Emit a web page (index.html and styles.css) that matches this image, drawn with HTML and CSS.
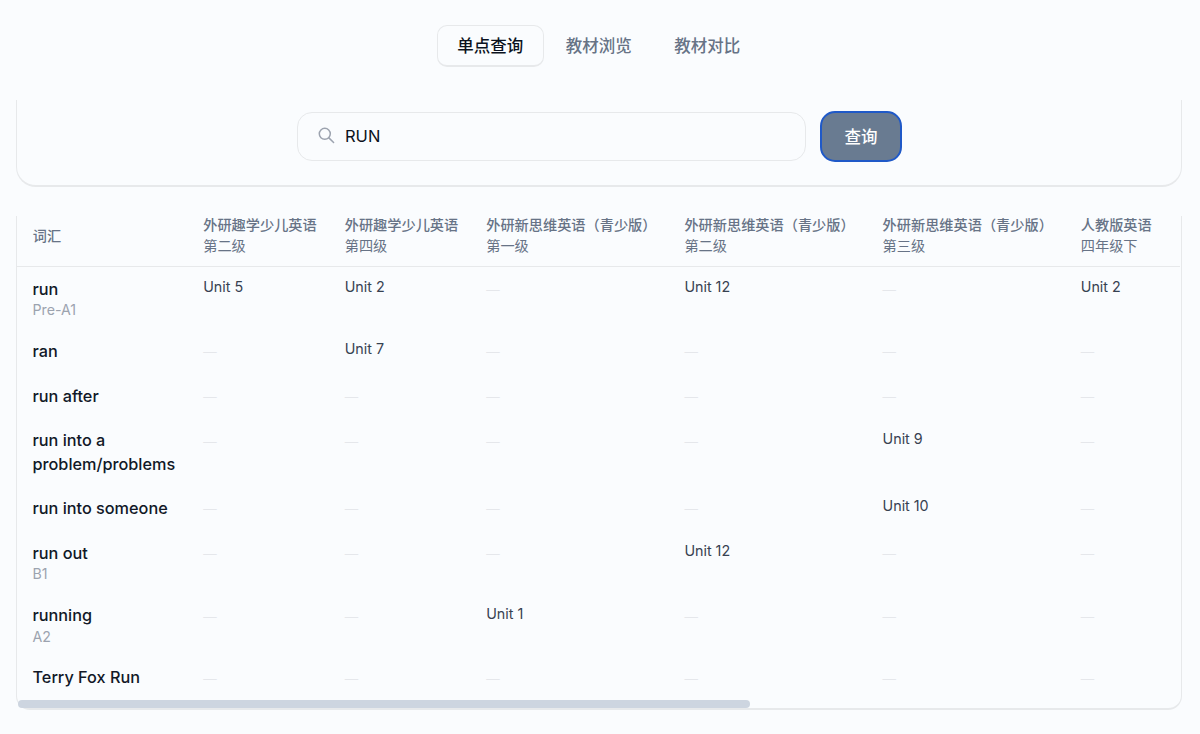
FILE: index.html
```
<!DOCTYPE html>
<html lang="zh-CN">
<head>
    <meta charset="UTF-8">
    <meta name="viewport" content="width=device-width, initial-scale=1.0">
    <title>单点查询</title>
    <link rel="stylesheet" href="styles.css">
</head>
<body>

    <!-- 顶部标签 -->
    <nav class="tabs">
        <button class="tab active">单点查询</button>
        <button class="tab">教材浏览</button>
        <button class="tab">教材对比</button>
    </nav>

    <!-- 搜索 -->
    <section class="search-card">
        <form class="search-form">
            <label class="search-box">
                <svg class="search-icon" viewBox="0 0 18 18">
                    <circle cx="6.8" cy="6.8" r="5.5"/>
                    <path d="M10.9 10.9L15.6 15.5"/>
                </svg>
                <input type="text" name="word" value="RUN">
            </label>
            <button type="button" class="search-button">查询</button>
        </form>
    </section>

    <!-- 查询结果 -->
    <section class="result-card">
        <div class="table-scroll">
            <table>
                <colgroup>
                    <col class="col-word">
                    <col class="col-short">
                    <col class="col-short">
                    <col class="col-long">
                    <col class="col-long">
                    <col class="col-long">
                    <col class="col-last">
                </colgroup>
                <thead>
                    <tr>
                        <th>词汇</th>
                        <th>外研趣学少儿英语<span>第二级</span></th>
                        <th>外研趣学少儿英语<span>第四级</span></th>
                        <th>外研新思维英语（青少版）<span>第一级</span></th>
                        <th>外研新思维英语（青少版）<span>第二级</span></th>
                        <th>外研新思维英语（青少版）<span>第三级</span></th>
                        <th>人教版英语<span>四年级下</span></th>
                    </tr>
                </thead>
                <tbody>
                    <tr class="with-level">
                        <td class="word">run<small>Pre-A1</small></td>
                        <td>Unit 5</td>
                        <td>Unit 2</td>
                        <td class="empty">—</td>
                        <td>Unit 12</td>
                        <td class="empty">—</td>
                        <td>Unit 2</td>
                    </tr>
                    <tr>
                        <td class="word">ran</td>
                        <td class="empty">—</td>
                        <td>Unit 7</td>
                        <td class="empty">—</td>
                        <td class="empty">—</td>
                        <td class="empty">—</td>
                        <td class="empty">—</td>
                    </tr>
                    <tr>
                        <td class="word">run after</td>
                        <td class="empty">—</td>
                        <td class="empty">—</td>
                        <td class="empty">—</td>
                        <td class="empty">—</td>
                        <td class="empty">—</td>
                        <td class="empty">—</td>
                    </tr>
                    <tr class="two-lines">
                        <td class="word">run into a problem/problems</td>
                        <td class="empty">—</td>
                        <td class="empty">—</td>
                        <td class="empty">—</td>
                        <td class="empty">—</td>
                        <td>Unit 9</td>
                        <td class="empty">—</td>
                    </tr>
                    <tr>
                        <td class="word">run into someone</td>
                        <td class="empty">—</td>
                        <td class="empty">—</td>
                        <td class="empty">—</td>
                        <td class="empty">—</td>
                        <td>Unit 10</td>
                        <td class="empty">—</td>
                    </tr>
                    <tr class="with-level">
                        <td class="word">run out<small>B1</small></td>
                        <td class="empty">—</td>
                        <td class="empty">—</td>
                        <td class="empty">—</td>
                        <td>Unit 12</td>
                        <td class="empty">—</td>
                        <td class="empty">—</td>
                    </tr>
                    <tr class="with-level">
                        <td class="word">running<small>A2</small></td>
                        <td class="empty">—</td>
                        <td class="empty">—</td>
                        <td>Unit 1</td>
                        <td class="empty">—</td>
                        <td class="empty">—</td>
                        <td class="empty">—</td>
                    </tr>
                    <tr>
                        <td class="word">Terry Fox Run</td>
                        <td class="empty">—</td>
                        <td class="empty">—</td>
                        <td class="empty">—</td>
                        <td class="empty">—</td>
                        <td class="empty">—</td>
                        <td class="empty">—</td>
                    </tr>
                </tbody>
            </table>
        </div>
        <div class="scrollbar"><div class="thumb"></div></div>
    </section>

</body>
</html>
```
FILE: styles.css
```
* {
    box-sizing: border-box;
}
body {
    margin: 0;
    padding: 25px 18px 0 16px;
    height: 734px;
    overflow: hidden;
    background-color: #fafcfe;
    color: #111827;
    font-family: Inter, "Noto Sans CJK SC", sans-serif;
}
button,
input {
    font-family: inherit;
    font-size: 16.5px;
}
/* 标签 */
.tabs {
    display: flex;
    gap: 2px;
    margin-left: 421px;
}
.tab {
    width: 106.5px;
    height: 42px;
    padding: 0 0 2px;
    border: 1px solid transparent;
    border-radius: 10px;
    background: none;
    color: #677386;
    font-weight: 500;
}
.tab.active {
    border-color: #e7e9eb;
    border-bottom-width: 2px;
    padding-bottom: 1px;
    color: #0b1220;
}
/* 搜索卡片 */
.search-card {
    height: 87px;
    margin-top: 33px;
    border: 1px solid #e7e9eb;
    border-top: none;
    border-bottom-width: 2px;
    border-radius: 0 0 20px 20px;
}
.search-form {
    display: flex;
    align-items: center;
    gap: 14px;
    padding: 11px 0 0 280px;
}
.search-box {
    display: flex;
    align-items: center;
    width: 509px;
    height: 49px;
    padding: 0 19px 1px 20px;
    border: 1px solid #e7e9eb;
    border-radius: 15px;
}
.search-icon {
    width: 18px;
    height: 18px;
    fill: none;
    stroke: #9ca3af;
    stroke-width: 1.5;
    stroke-linecap: round;
}
.search-box input {
    flex: 1;
    margin-left: 9px;
    padding: 0;
    border: none;
    outline: none;
    background: none;
    color: #0b1220;
}
.search-button {
    width: 82px;
    height: 51px;
    padding: 0 0 2px;
    border: 2px solid #1f59c8;
    border-radius: 15px;
    background-color: #697b91;
    color: #fff;
    font-weight: 500;
}
/* 结果表格 */
.result-card {
    height: 494px;
    margin-top: 29px;
    border: 1px solid #e7e9eb;
    border-top: none;
    border-bottom-width: 2px;
    border-radius: 0 0 14px 14px;
}
.table-scroll {
    height: 484px;
    margin-right: 1px;
    overflow: hidden;
}
table {
    width: 1246px;
    margin-top: -2px;
    table-layout: fixed;
    border-collapse: separate;
    border-spacing: 0;
}
.col-word {
    width: 170.5px;
}
.col-short {
    width: 141.5px;
}
.col-long {
    width: 198.2px;
}
.col-last {
    width: 198px;
}
th {
    height: 51px;
    padding: 0 0 10px 15.7px;
    border-bottom: 1px solid #e7e9eb;
    color: #677386;
    font-size: 14.2px;
    font-weight: 500;
    line-height: 21px;
    text-align: left;
    white-space: nowrap;
}
th span {
    display: block;
    font-weight: 400;
}
td {
    height: 44.8px;
    padding: 9px 0 0 15.7px;
    color: #374151;
    font-size: 14.3px;
    line-height: 21px;
    vertical-align: top;
}
.with-level td {
    height: 62.4px;
}
.two-lines td {
    height: 67.4px;
}
td.word {
    padding: 10.5px 0 0 15.5px;
    color: #111827;
    font-size: 16.25px;
    font-weight: 500;
    line-height: 23.6px;
}
.word small {
    display: block;
    color: #9ca3af;
    font-size: 14.2px;
    font-weight: 400;
    line-height: 18.4px;
}
td.empty {
    padding-top: 13px;
    color: #e5e7eb;
    font-size: 13.4px;
}
/* 横向滚动条 */
.scrollbar {
    height: 8px;
    padding-left: 1px;
}
.thumb {
    width: 732px;
    height: 8px;
    border-radius: 4px;
    background-color: #cdd5e0;
}
```
